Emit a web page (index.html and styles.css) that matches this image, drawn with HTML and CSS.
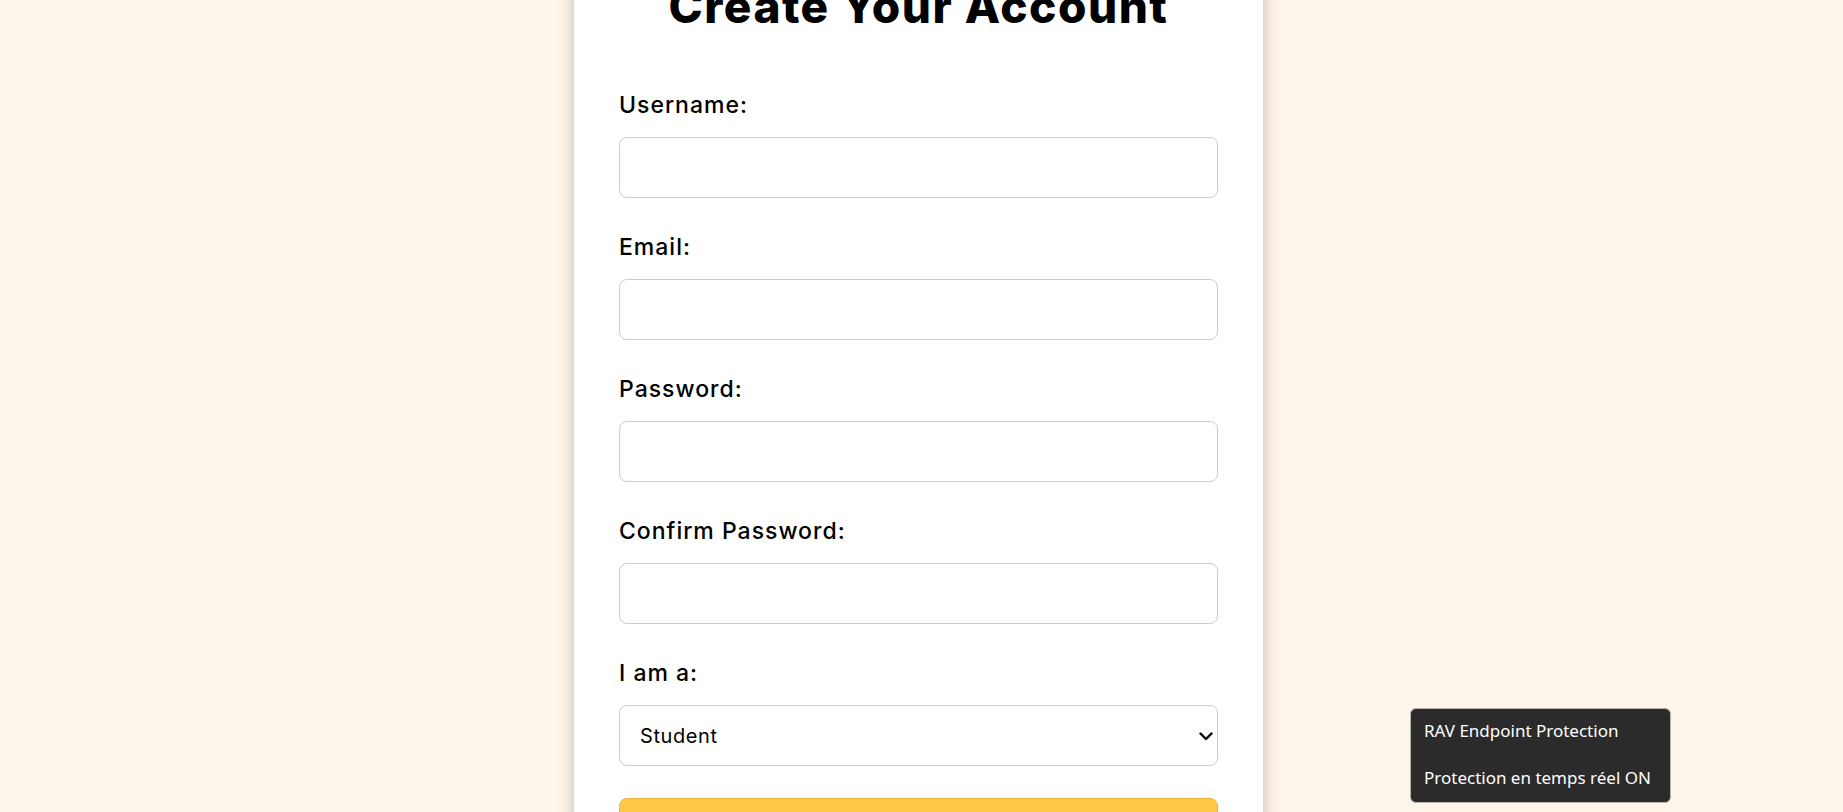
FILE: index.html
```html
<!DOCTYPE html>
<html lang="en">
<head>
<meta charset="utf-8">
<title>Create Your Account</title>
<link rel="stylesheet" href="styles.css">
</head>
<body>
  <main class="page">
    <form class="card">
      <h1 class="title">Create Your Account</h1>
      <div class="field">
        <label class="label" for="username">Username:</label>
        <input class="control" id="username" type="text">
      </div>
      <div class="field">
        <label class="label" for="email">Email:</label>
        <input class="control" id="email" type="email">
      </div>
      <div class="field">
        <label class="label" for="password">Password:</label>
        <input class="control" id="password" type="password">
      </div>
      <div class="field">
        <label class="label" for="confirm">Confirm Password:</label>
        <input class="control" id="confirm" type="password">
      </div>
      <div class="field field-last">
        <label class="label" for="role">I am a:</label>
        <div class="select-wrap">
          <select class="control select" id="role">
            <option>Student</option>
            <option>Teacher</option>
          </select>
          <svg class="chevron" width="14" height="9" viewBox="0 0 14 9" aria-hidden="true">
            <path d="M1.5 1.5 L7 7 L12.5 1.5" fill="none" stroke="#000" stroke-width="2.4" stroke-linecap="round" stroke-linejoin="round"/>
          </svg>
        </div>
      </div>
      <button class="submit" type="submit">Sign Up</button>
    </form>
  </main>
  <div class="toast">
    <div class="toast-row">RAV Endpoint Protection</div>
    <div class="toast-row">Protection en temps réel ON</div>
  </div>
</body>
</html>
```

FILE: styles.css
```css
html, body {
  margin: 0;
  padding: 0;
  height: 100%;
  overflow: hidden;
}

body {
  background: #fdf4ea;
  font-family: "Inter", "Noto Sans", sans-serif;
  color: #000;
}

.page {
  display: flex;
  justify-content: center;
  padding-right: 6px;
}

.card {
  box-sizing: border-box;
  width: 689px;
  margin-top: -18px;
  padding: 0 45px 40px;
  background: #fff;
  box-shadow: 0 0 14px rgba(60, 40, 20, 0.28);
  display: flex;
  flex-direction: column;
}

.title {
  margin: 0 0 60px;
  font-size: 46px;
  line-height: 48px;
  font-weight: 800;
  text-align: center;
  letter-spacing: 1.5px;
}

.field {
  display: flex;
  flex-direction: column;
  margin-bottom: 34px;
}

.field-last {
  margin-bottom: 32px;
}

.label {
  font-size: 23px;
  line-height: 30px;
  font-weight: 500;
  letter-spacing: 1px;
  margin-bottom: 17px;
}

.control {
  box-sizing: border-box;
  width: 100%;
  height: 61px;
  border: 1px solid #cccccc;
  border-radius: 8px;
  background: #fff;
  padding: 0 20px;
  font-family: inherit;
  font-size: 20px;
  color: #000;
}

.select-wrap {
  position: relative;
}

.select {
  appearance: none;
  -webkit-appearance: none;
  padding-left: 20px;
  letter-spacing: 0.6px;
}

.chevron {
  position: absolute;
  right: 5px;
  top: 50%;
  margin-top: -4px;
  pointer-events: none;
}

.submit {
  box-sizing: border-box;
  width: 100%;
  height: 61px;
  border: 1px solid #e7b53c;
  border-radius: 8px;
  background: #ffc947;
  font-family: inherit;
  font-size: 20px;
  font-weight: 700;
}

.toast {
  position: fixed;
  left: 1410px;
  top: 708px;
  width: 261px;
  box-sizing: border-box;
  padding-bottom: 2px;
  background: #2b2b2b;
  border: 1px solid #b9b3ab;
  border-radius: 6px;
  display: flex;
  flex-direction: column;
  gap: 3px;
  font-family: "Noto Sans", "Open Sans", sans-serif;
  font-size: 17px;
  color: #ffffff;
}

.toast-row {
  height: 44px;
  line-height: 44px;
  padding: 0 13px;
  white-space: nowrap;
}
```
